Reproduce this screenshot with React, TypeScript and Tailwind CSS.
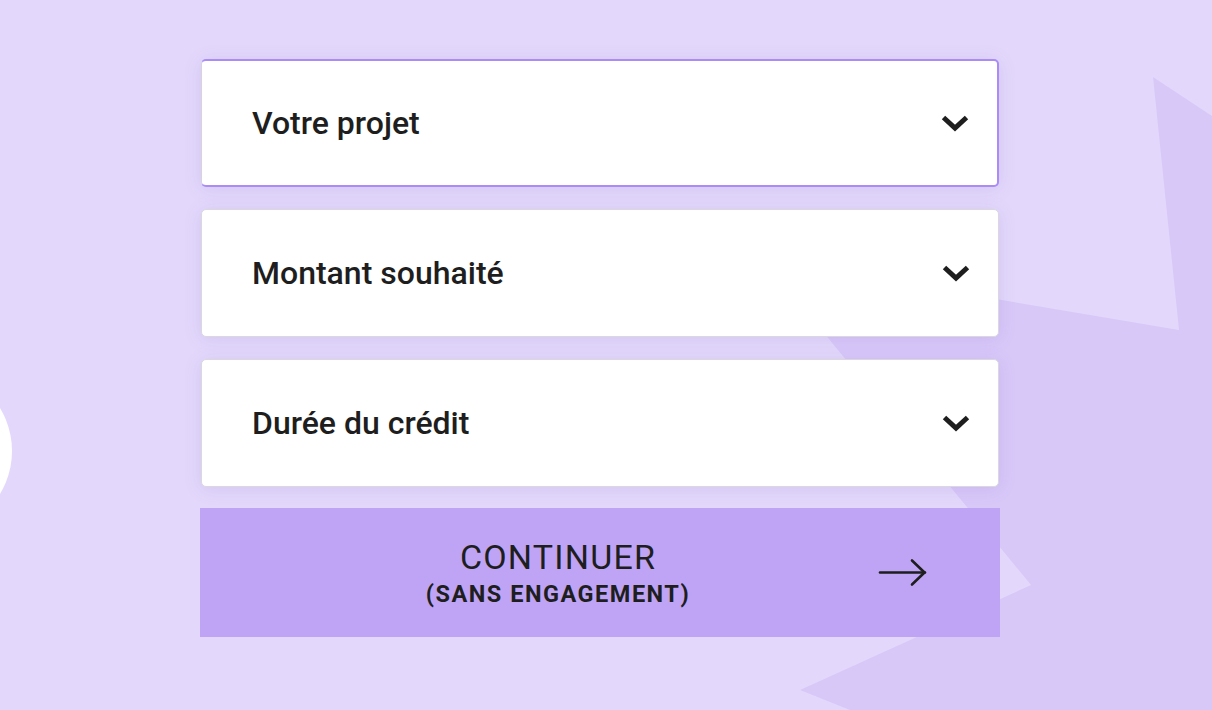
import { ReactNode } from 'react';

const fields = [
  { label: 'Votre projet', active: true },
  { label: 'Montant souhaité', active: false },
  { label: 'Durée du crédit', active: false },
];

function Chevron() {
  return (
    <svg width="28" height="20" viewBox="0 0 28 20" fill="none">
      <polyline
        points="2.5,4.5 14,15 25.5,4.5"
        stroke="#1e1e1e"
        strokeWidth="5"
        strokeLinecap="butt"
        strokeLinejoin="miter"
      />
    </svg>
  );
}

function Arrow() {
  return (
    <svg width="52" height="30" viewBox="0 0 52 30" fill="none">
      <path d="M2 14.5 H47" stroke="#1e1e1e" strokeWidth="2.6" strokeLinecap="round" />
      <path d="M34 2.5 L46.5 14.5 L34 26.5" stroke="#1e1e1e" strokeWidth="2.6" strokeLinecap="round" strokeLinejoin="round" />
    </svg>
  );
}

function Field({ label, active }: { label: string; active: boolean }) {
  return (
    <button
      className={`mx-px h-[128px] flex items-center justify-between bg-white rounded-[5px] pl-[50px] pr-[28px] shadow-[0_2px_18px_rgba(110,70,190,0.13)] ${
        active
          ? 'border-y-2 border-r-2 border-l border-[#a98cf6] border-l-[#d6d3de]'
          : 'border border-[#d9d8de]'
      }`}
    >
      <span className="text-[32px] font-medium text-[#1e1e1e] leading-none">{label}</span>
      <Chevron />
    </button>
  );
}

function Background({ children }: { children: ReactNode }) {
  return (
    <div className="relative w-full h-[710px] overflow-hidden bg-[#e3d8fb]">
      {/* decorative shapes */}
      <svg className="absolute inset-0 pointer-events-none" width="1212" height="710" viewBox="0 0 1212 710">
        <polygon
          points="764,260 1179,330 1153,77 1212,116 1212,710 850,710 800,690 1031,585"
          fill="#d8c8f8"
        />
        <circle cx="-71" cy="451" r="83" fill="#ffffff" />
      </svg>
      <div className="relative">{children}</div>
    </div>
  );
}

export default function App() {
  return (
    <div style={{ fontFamily: 'Roboto, "Noto Sans", sans-serif' }}>
      <Background>
        <div className="w-[800px] ml-[200px] pt-[59px] flex flex-col">
          <div className="flex flex-col gap-[22px]">
            {fields.map((f) => (
              <Field key={f.label} label={f.label} active={f.active} />
            ))}
          </div>

          {/* Continue button */}
          <button className="relative mt-[21px] h-[129px] bg-[#bfa4f6] flex items-center justify-center pr-[84px] pt-[2px]">
            <div className="flex flex-col items-center text-[#1e1e1e]">
              <span className="text-[34px] leading-[36px] tracking-[1.2px] uppercase">Continuer</span>
              <span className="mt-[5px] text-[23.5px] leading-[28px] tracking-[1.5px] font-bold uppercase">
                (sans engagement)
              </span>
            </div>
            <div className="absolute right-[70px] top-[50px]">
              <Arrow />
            </div>
          </button>
        </div>
      </Background>
    </div>
  );
}
